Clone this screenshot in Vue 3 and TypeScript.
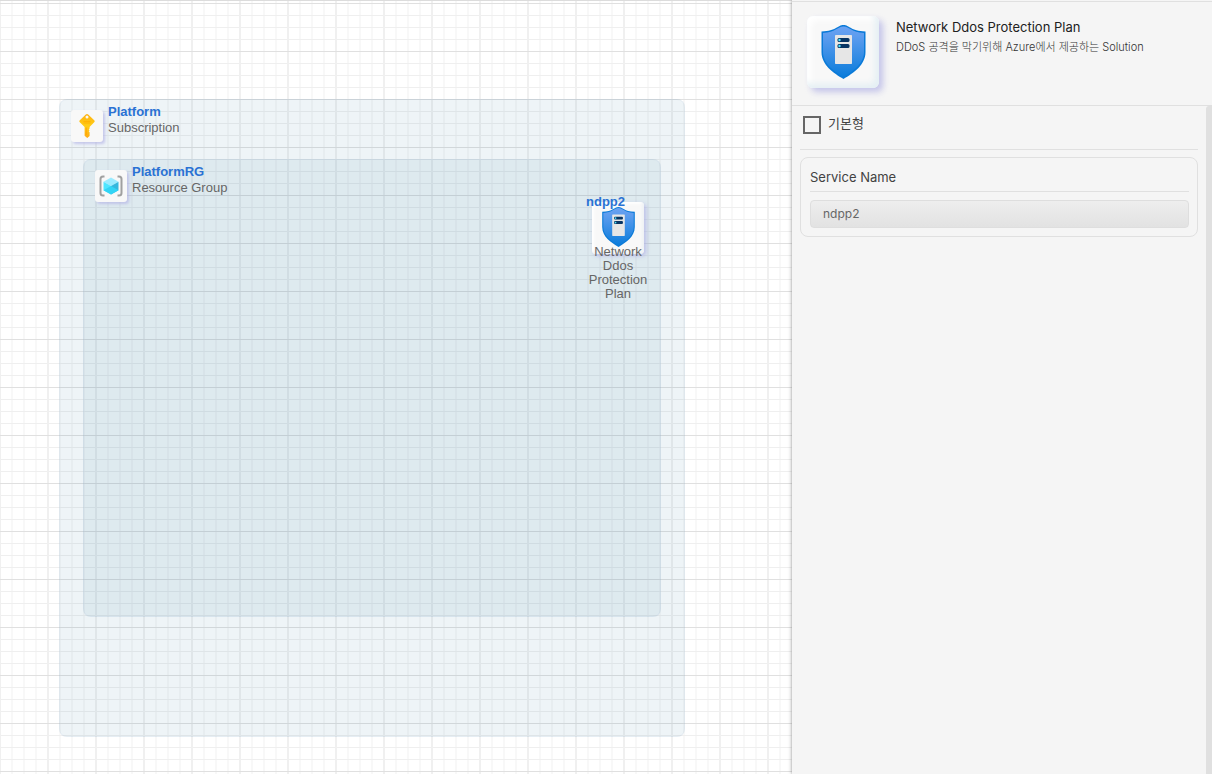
<script setup lang="ts">
import { ref } from 'vue'

interface Resource {
  name: string
  kind: string
}

const subscription: Resource = { name: 'Platform', kind: 'Subscription' }
const group: Resource = { name: 'PlatformRG', kind: 'Resource Group' }
const plan: Resource = { name: 'ndpp2', kind: 'Network Ddos Protection Plan' }

const basic = ref(false)
const serviceName = ref(plan.name)
</script>

<template>
  <div class="app">
    <main class="canvas">
      <svg class="defs" aria-hidden="true">
        <defs>
          <linearGradient id="shieldFill" x1="0" y1="0" x2="0" y2="1">
            <stop offset="0" stop-color="#6ba1f2" />
            <stop offset="0.2" stop-color="#5c9cee" />
            <stop offset="1" stop-color="#0a7cdb" />
          </linearGradient>
          <linearGradient id="keyFill" x1="0" y1="0" x2="0" y2="1">
            <stop offset="0" stop-color="#feb010" />
            <stop offset="0.5" stop-color="#ffce18" />
            <stop offset="1" stop-color="#feaa13" />
          </linearGradient>
          <symbol id="shield" viewBox="0 0 44 54">
            <path
              d="M22 0C28 0 29 6 44 6.500V27C44 40 32 48 22 54C12 48 0 40 0 27V6.500C15 6 16 0 22 0Z"
              fill="#0a7ad8"
            />
            <path
              d="M22 1.500C28 1.500 30 7.500 42.500 8V27C42.500 39 31 46.500 22 52C13 46.500 1.500 39 1.500 27V8C14 7.500 16 1.500 22 1.500Z"
              fill="url(#shieldFill)"
            />
            <rect x="13.500" y="10" width="17" height="29" rx="0.700" fill="#e6e6e6" />
            <rect x="16" y="13" width="12" height="4" rx="1.500" fill="#073463" />
            <rect x="16" y="19" width="12" height="4" rx="1.500" fill="#073463" />
            <circle cx="18" cy="15" r="1.200" fill="#50e6ff" />
            <circle cx="18" cy="21" r="1.200" fill="#50e6ff" />
          </symbol>
        </defs>
      </svg>

      <section class="zone zone-outer">
        <header class="zone-head">
          <span class="tile tile-sm">
            <svg width="16" height="24" viewBox="0 0 16 24" aria-hidden="true">
              <path
                d="M9.200 0.500L15.200 6.300Q16.200 7.300 15.200 8.300L10.600 13V14.500L9.700 15.300L10.600 16.200L9.700 17.200L10.600 18.200V22L8.200 24L5.600 21.800V13L0.800 8.300Q-0.200 7.300 0.800 6.300L6.800 0.500Q8 -0.400 9.200 0.500Z"
                fill="url(#keyFill)"
              />
              <circle cx="8" cy="3" r="1.500" fill="#f8f8f8" />
              <path d="M4.500 7.500H11.500M4.500 9H11.500" stroke="#ffae00" stroke-width="0.800" />
              <path d="M7.200 13.500V21" stroke="#ff9f00" stroke-width="0.800" />
            </svg>
          </span>
          <div class="caption">
            <strong>{{ subscription.name }}</strong>
            <span>{{ subscription.kind }}</span>
          </div>
        </header>
      </section>

      <section class="zone zone-inner">
        <header class="zone-head">
          <span class="tile tile-sm">
            <svg width="24" height="22" viewBox="0 0 24 22" aria-hidden="true">
              <path
                d="M5.500 1.500H4Q1.500 1.500 1.500 4V18Q1.500 20.500 4 20.500H5.500M18.500 1.500H20Q22.500 1.500 22.500 4V18Q22.500 20.500 20 20.500H18.500"
                fill="none"
                stroke="#a0a0a0"
                stroke-width="2"
              />
              <path d="M12 2.500L19.500 6.800L12 11L4.500 6.800Z" fill="#9cebff" />
              <path d="M4.500 6.800L12 11V19.500L4.500 15.200Z" fill="#50e6ff" />
              <path d="M19.500 6.800L12 11V19.500L19.500 15.200Z" fill="#35b8de" />
              <path d="M12 11L19.500 15.200L12 19.500L4.500 15.200Z" fill="#32d4f5" />
            </svg>
          </span>
          <div class="caption">
            <strong>{{ group.name }}</strong>
            <span>{{ group.kind }}</span>
          </div>
        </header>
      </section>

      <article class="node">
        <span class="tile tile-md">
          <svg width="33" height="40" aria-hidden="true"><use href="#shield" /></svg>
        </span>
        <strong class="node-name">{{ plan.name }}</strong>
        <span class="node-kind">{{ plan.kind }}</span>
      </article>
    </main>

    <aside class="panel">
      <header class="panel-head">
        <span class="tile tile-lg">
          <svg width="45" height="54" aria-hidden="true"><use href="#shield" /></svg>
        </span>
        <div class="panel-text">
          <h1>Network Ddos Protection Plan</h1>
          <p>DDoS 공격을 막기위해 Azure에서 제공하는 Solution</p>
        </div>
      </header>
      <div class="panel-body">
        <form class="form" @submit.prevent>
          <label class="check">
            <input v-model="basic" type="checkbox" />
            <span>기본형</span>
          </label>
          <div class="field">
            <label for="service-name">Service Name</label>
            <input id="service-name" v-model="serviceName" type="text" readonly />
          </div>
        </form>
        <div class="scroll"></div>
      </div>
    </aside>
  </div>
</template>

<style>
body {
  margin: 0;
}
</style>

<style scoped>
* {
  box-sizing: border-box;
}

.app {
  display: flex;
  min-height: 100vh;
  font-family: Inter, 'Noto Sans CJK KR', sans-serif;
}

.canvas {
  position: relative;
  flex: 1;
  min-width: 0;
  overflow: hidden;
  border-top: 1px solid #dcdcdc;
  font-family: 'Liberation Sans', Arial, sans-serif;
  font-size: 13px;
  background-color: #fff;
  background-image:
    linear-gradient(#e0e0e0 1px, transparent 1px),
    linear-gradient(90deg, #f0f0f0 2px, transparent 2px),
    linear-gradient(#efefef 1px, transparent 1px),
    linear-gradient(90deg, #f8f8f8 2px, transparent 2px);
  background-size: 48px 48px, 48px 48px, 12px 12px, 12px 12px;
  background-position: -1px 2px;
}

.defs {
  position: absolute;
  width: 0;
  height: 0;
}

.zone {
  position: absolute;
  border: 1px solid rgba(70, 130, 170, 0.14);
  border-radius: 8px;
  background: rgba(70, 130, 170, 0.09);
  background-clip: padding-box;
}

.zone-outer {
  left: 59px;
  top: 98px;
  width: 626px;
  height: 638px;
}

.zone-inner {
  left: 83px;
  top: 158px;
  width: 578px;
  height: 458px;
}

.zone-head {
  display: flex;
  gap: 5px;
  padding: 4px 11px;
}

.tile {
  display: flex;
  flex: none;
  align-items: center;
  justify-content: center;
  background: #f8f8f8;
}

.tile-sm {
  width: 32px;
  height: 32px;
  margin-top: 6px;
  border-radius: 3px;
  box-shadow: 2px 2px 3px rgba(180, 180, 230, 0.7);
}

.tile-md {
  width: 52px;
  height: 52px;
  border-radius: 4px;
  box-shadow: 2px 2px 4px rgba(180, 180, 230, 0.8), inset -2px -2px 3px #eef2f5, inset 2px 2px 3px #fff;
}

.tile-lg {
  width: 72px;
  height: 72px;
  border-radius: 6px;
  box-shadow: 4px 4px 6px rgba(180, 180, 230, 0.75), inset -4px -4px 6px #e4eff4, inset 4px 4px 6px #fff;
}

.caption {
  display: flex;
  flex-direction: column;
  line-height: 16px;
  color: #666;
}

.caption strong,
.node-name {
  color: #2a72d4;
}

.node {
  position: absolute;
  left: 582px;
  top: 201px;
  width: 72px;
  display: flex;
  flex-direction: column;
  align-items: center;
}

.node-name {
  position: absolute;
  left: 4px;
  top: -8px;
  line-height: 16px;
}

.tile-md svg {
  margin-bottom: 2px;
}

.node-kind {
  margin-top: -9px;
  line-height: 14px;
  text-align: center;
  color: #666;
}

.panel {
  position: relative;
  display: flex;
  flex-direction: column;
  flex: none;
  width: 420px;
  padding-top: 1px;
  background: #f5f5f5;
  box-shadow: 0 0 4px rgba(0, 0, 0, 0.4);
}

.panel-head {
  display: flex;
  gap: 17px;
  padding: 14px 15px 17px;
  border-top: 1px solid #e0e0e0;
  border-bottom: 1px solid #e0e0e0;
}

.panel-text {
  padding-top: 1px;
}

h1 {
  margin: 0;
  font-size: 13px;
  line-height: 20px;
  font-weight: 400;
  color: #212121;
}

p {
  margin: 0;
  font-size: 11px;
  line-height: 20px;
  font-weight: 300;
  color: #333;
}

.panel-body {
  display: flex;
  flex: 1;
}

.form {
  flex: 1;
  padding: 0 8px;
}

.check {
  display: flex;
  gap: 7px;
  height: 44px;
  padding: 10px 3px;
  border-bottom: 1px solid #e0e0e0;
  font-size: 13px;
  line-height: 14px;
  color: #424242;
}

.check input {
  appearance: none;
  width: 18px;
  height: 18px;
  margin: 0;
  border: 2px solid #666;
  background: #f5f5f5;
}

.check input:checked {
  background: #666;
}

.field {
  display: flex;
  flex-direction: column;
  gap: 8px;
  margin-top: 7px;
  padding: 8px 8px 8px 9px;
  border: 1px solid #e0e0e0;
  border-radius: 8px;
}

.field label {
  padding-bottom: 3px;
  border-bottom: 1px solid #e0e0e0;
  font-size: 13px;
  line-height: 22px;
  color: #424242;
}

.field input {
  width: 100%;
  height: 28px;
  padding: 0 12px 2px;
  border: 1px solid #dedede;
  border-radius: 4px;
  background: linear-gradient(#eeeeee, #e2e2e2);
  font-family: inherit;
  font-size: 12px;
  color: #666;
}

.scroll {
  width: 6px;
  border-top-left-radius: 3px;
  background: #e0e0e0;
}
</style>
